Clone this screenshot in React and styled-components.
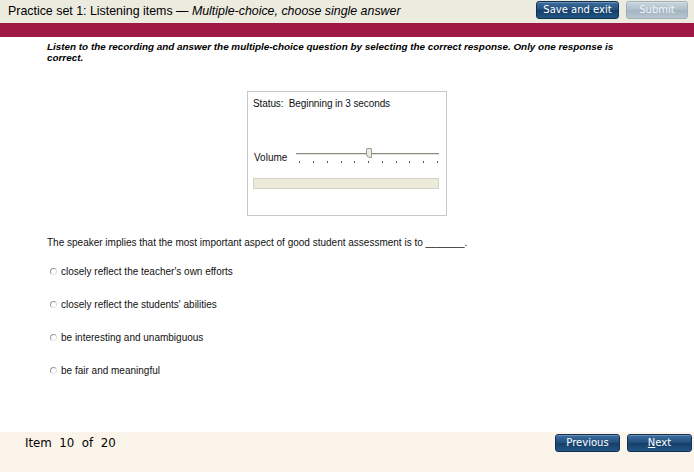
import React from 'react'
import styled, { createGlobalStyle } from 'styled-components'

const GlobalStyle = createGlobalStyle`
  html, body {
    margin: 0;
    padding: 0;
    background: #ffffff;
  }
  body {
    font-family: "Liberation Sans", Arial, sans-serif;
    color: #000;
  }
  * {
    box-sizing: border-box;
  }
`

const options = [
  "closely reflect the teacher's own efforts",
  "closely reflect the students' abilities",
  "be interesting and unambiguous",
  "be fair and meaningful",
]

const ticks = Array.from({ length: 11 })

const App = () => {
  return (
    <Page>
      <GlobalStyle />
      <TitleBar>
        <Title>
          Practice set 1: Listening items — <em>Multiple-choice, choose single answer</em>
        </Title>
        <ButtonGroup>
          <NavButton $w={83}>Save and exit</NavButton>
          <NavButton $w={62} disabled>Submit</NavButton>
        </ButtonGroup>
      </TitleBar>
      <Band />

      <Main>
        <Instructions>
          Listen to the recording and answer the multiple-choice question by selecting the correct response. Only one response is correct.
        </Instructions>

        <Player>
          <Status>Status:&nbsp; Beginning in 3 seconds</Status>
          <VolumeRow>
            <VolumeLabel>Volume</VolumeLabel>
            <Slider>
              <Track />
              <Thumb />
              <Ticks>
                {ticks.map((_, i) => <Tick key={i} />)}
              </Ticks>
            </Slider>
          </VolumeRow>
          <Progress />
        </Player>

        <Question>
          The speaker implies that the most important aspect of good student assessment is to _______.
        </Question>

        <Options>
          {options.map((o) => (
            <Option key={o}>
              <Radio />
              <span>{o}</span>
            </Option>
          ))}
        </Options>
      </Main>

      <Footer>
        <ItemCount>Item&nbsp; 10&nbsp; of&nbsp; 20</ItemCount>
        <ButtonGroup>
          <NavButton $w={65}>Previous</NavButton>
          <NavButton $w={65}><u>N</u>ext</NavButton>
        </ButtonGroup>
      </Footer>
    </Page>
  )
}

export default App

const Page = styled.div`
  width: 694px;
  height: 472px;
  display: flex;
  flex-direction: column;
  overflow: hidden;
`

const TitleBar = styled.div`
  height: 23px;
  flex-shrink: 0;
  background: #ecebe0;
  display: flex;
  align-items: flex-start;
  justify-content: space-between;
  padding: 1px 6px 0 8px;
`

const Title = styled.div`
  font-size: 12.4px;
  line-height: 20px;
  color: #000;

  em {
    font-style: italic;
  }
`

const ButtonGroup = styled.div`
  display: flex;
  gap: 7px;
`

const NavButton = styled.button`
  height: 18px;
  width: ${p => p.$w}px;
  padding: 0;
  border-radius: 3px;
  border: 1px solid ${p => (p.disabled ? '#9fb0bc' : '#0f2f55')};
  background: ${p => p.disabled
    ? 'linear-gradient(#c9d5dd, #adbfcb 50%, #a2b5c2 51%, #b7c6d0)'
    : 'linear-gradient(#3f6f9f, #1f4d7c 50%, #143d68 51%, #235684)'};
  color: ${p => (p.disabled ? '#eef2f5' : '#ffffff')};
  font-family: "DejaVu Sans", Verdana, sans-serif;
  font-size: 10px;
  line-height: 16px;
  box-shadow: inset 0 1px 0 rgba(255, 255, 255, 0.25);
  cursor: pointer;

  u {
    text-decoration: underline;
  }
`

const Band = styled.div`
  height: 14px;
  flex-shrink: 0;
  background: #9e1745;
`

const Main = styled.div`
  flex: 1;
  display: flex;
  flex-direction: column;
  padding: 4px 0 0 47px;
`

const Instructions = styled.div`
  width: 600px;
  font-size: 9.9px;
  font-weight: bold;
  font-style: italic;
  line-height: 11px;
`

const Player = styled.div`
  align-self: center;
  margin: 28px 0 0 -47px;
  width: 200px;
  height: 125px;
  border: 1px solid #c8c8c8;
  padding: 6px 7px 0 5px;
  display: flex;
  flex-direction: column;
`

const Status = styled.div`
  font-size: 10px;
  color: #111;
  letter-spacing: -0.1px;
`

const VolumeRow = styled.div`
  display: flex;
  align-items: center;
  margin-top: 40px;
  padding-left: 1px;
  gap: 9px;
`

const VolumeLabel = styled.div`
  font-size: 10px;
  color: #111;
`

const Slider = styled.div`
  position: relative;
  flex: 1;
  height: 16px;
`

const Track = styled.div`
  position: absolute;
  left: 0;
  right: 0;
  top: 4px;
  height: 2px;
  background: #8c8a80;
  border-bottom: 1px solid #e4e2d8;
`

const Thumb = styled.div`
  position: absolute;
  left: 70px;
  top: -1px;
  width: 6px;
  height: 10px;
  background: #ecebe0;
  border: 1px solid #9a9890;
  border-radius: 1px 1px 0 4px;
`

const Ticks = styled.div`
  position: absolute;
  left: 3px;
  right: 1px;
  top: 12px;
  display: flex;
  justify-content: space-between;
`

const Tick = styled.div`
  width: 1px;
  height: 2px;
  background: #555;
`

const Progress = styled.div`
  margin-top: 13px;
  height: 11px;
  background: #ecead9;
  border: 1px solid #d4d2c6;
`

const Question = styled.div`
  margin-top: 21px;
  font-size: 10px;
  color: #111;
`

const Options = styled.div`
  display: flex;
  flex-direction: column;
  gap: 21px;
  margin-top: 17px;
  padding-left: 3px;
`

const Option = styled.label`
  display: flex;
  align-items: center;
  gap: 4px;
  font-size: 10px;
  color: #111;
  height: 12px;
`

const Radio = styled.span`
  width: 7px;
  height: 7px;
  border-radius: 50%;
  border: 1px solid #9a9a9a;
  border-right-color: #dcdcdc;
  border-bottom-color: #e6e6e6;
  background: #fff;
`

const Footer = styled.div`
  height: 40px;
  flex-shrink: 0;
  background: #faf4ea;
  display: flex;
  align-items: flex-start;
  justify-content: space-between;
  padding: 2px 2px 0 25px;
`

const ItemCount = styled.div`
  font-family: "DejaVu Sans", Verdana, sans-serif;
  font-size: 11.8px;
  margin-top: 2px;
`
